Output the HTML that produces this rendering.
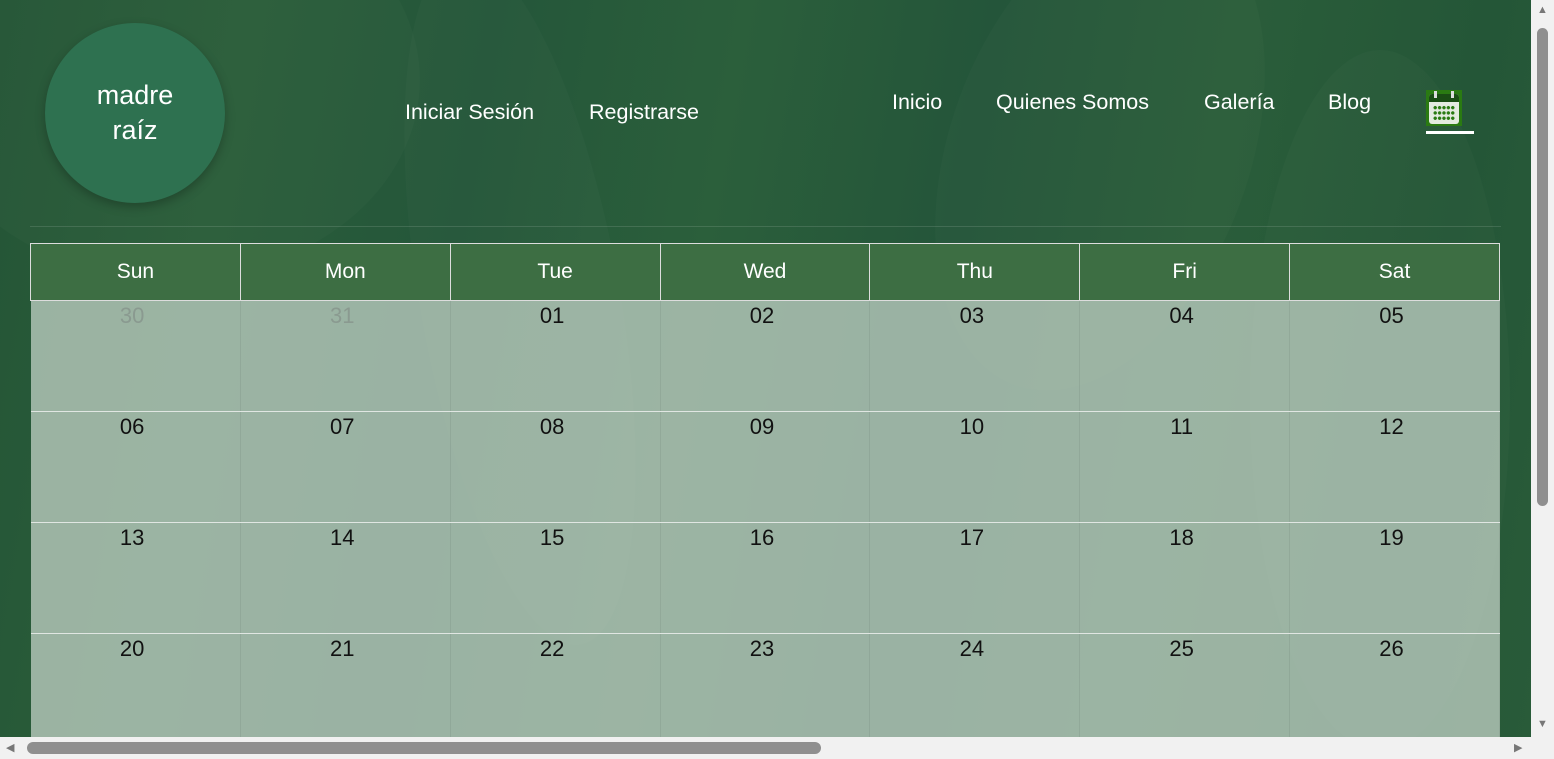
<!DOCTYPE html>
<html><head><meta charset="utf-8"><style>
*{margin:0;padding:0;box-sizing:border-box}
html,body{width:1554px;height:759px;overflow:hidden;font-family:"Liberation Sans",Arial,sans-serif}
body{background:#25573a;position:relative}
.bg{position:absolute;left:0;top:0;width:1531px;height:737px;overflow:hidden;
background:linear-gradient(100deg,#245536 0%,#2a5d3a 15%,#24563a 30%,#2b5f3b 45%,#24553a 60%,#2a5d3a 75%,#245637 90%,#295b39 100%)}
.bg i{position:absolute;background:rgba(255,255,255,0.018);border-radius:50%}
.logo{position:absolute;left:45px;top:23px;width:180px;height:180px;border-radius:50%;background:#2e7150;box-shadow:0 4px 10px rgba(0,0,0,.25);color:#fff;font-size:27px;text-align:center;line-height:35px;padding-top:55px}
.nav{position:absolute;color:#fff;font-size:21.5px}
.line{position:absolute;left:30px;top:226px;width:1471px;height:1px;background:rgba(255,255,255,.12)}
table{position:absolute;left:30px;top:243px;border-collapse:collapse;width:1470px}
th{background:#3d6e43;color:#fff;font-weight:normal;font-size:21px;height:57px;border:1px solid #ddd;width:210px}
td{background:rgba(196,210,200,.74);height:111px;vertical-align:top;text-align:center;font-size:22px;color:#111;padding-top:2px;border-right:1px solid rgba(0,0,0,.06);border-bottom:1px solid #e0e6e2;padding-right:6px}
td.o{color:#8a9a90}
.vs{position:absolute;right:0;top:0;width:23px;height:737px;background:#f1f1f1}
.vs b{position:absolute;left:6px;top:28px;width:11px;height:478px;background:#8f8f8f;border-radius:6px}
.hs{position:absolute;left:0;bottom:0;width:1554px;height:22px;background:#f1f1f1}
.hs b{position:absolute;left:27px;top:5px;width:794px;height:12px;background:#8f8f8f;border-radius:6px}
.ar{position:absolute;color:#777;font-size:11px}
</style></head><body>
<div class="bg">
<i style="left:-80px;top:-120px;width:500px;height:400px"></i>
<i style="left:420px;top:-50px;width:200px;height:700px;transform:rotate(-10deg)"></i>
<i style="left:950px;top:-100px;width:300px;height:500px;transform:rotate(20deg)"></i>
<i style="left:1250px;top:50px;width:260px;height:700px"></i>
</div>
<div class="logo">madre<br>raíz</div>
<div class="nav" style="left:405px;top:100px">Iniciar Sesión</div>
<div class="nav" style="left:589px;top:100px">Registrarse</div>
<div class="nav" style="left:892px;top:90px">Inicio</div>
<div class="nav" style="left:996px;top:90px">Quienes Somos</div>
<div class="nav" style="left:1204px;top:90px">Galería</div>
<div class="nav" style="left:1328px;top:90px">Blog</div>
<div style="position:absolute;left:1426px;top:90px;width:36px;height:36px;background:#2a7a12">
 <div style="position:absolute;left:3px;top:4px;width:30px;height:30px;background:#e4ebe0;border-radius:3px;overflow:hidden">
  <div style="height:8px;background:#1a4d14"></div>
  <div style="position:absolute;left:4px;top:11px;width:22px;height:16px;background:radial-gradient(circle,#2a7a12 1.6px,transparent 1.8px) 0 0/4.4px 5.3px"></div>
 </div>
 <div style="position:absolute;left:8px;top:1px;width:3px;height:7px;background:#ddd"></div>
 <div style="position:absolute;left:25px;top:1px;width:3px;height:7px;background:#ddd"></div>
</div>
<div style="position:absolute;left:1426px;top:131px;width:48px;height:3px;background:#fff"></div>
<div class="line"></div>
<table>
<tr><th>Sun</th><th>Mon</th><th>Tue</th><th>Wed</th><th>Thu</th><th>Fri</th><th>Sat</th></tr>
<tr><td class="o">30</td><td class="o">31</td><td>01</td><td>02</td><td>03</td><td>04</td><td>05</td></tr>
<tr><td>06</td><td>07</td><td>08</td><td>09</td><td>10</td><td>11</td><td>12</td></tr>
<tr><td>13</td><td>14</td><td>15</td><td>16</td><td>17</td><td>18</td><td>19</td></tr>
<tr><td>20</td><td>21</td><td>22</td><td>23</td><td>24</td><td>25</td><td>26</td></tr>
</table>
<div class="vs"><b></b><span class="ar" style="left:6px;top:4px">▲</span><span class="ar" style="left:6px;top:718px">▼</span></div>
<div class="hs"><b></b><span class="ar" style="left:6px;top:4px">◀</span><span class="ar" style="left:1514px;top:4px">▶</span></div>
</body></html>
